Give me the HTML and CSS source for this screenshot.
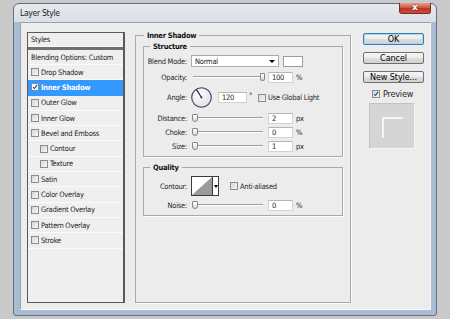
FILE: index.html
```html
<!DOCTYPE html>
<html lang="en">
<head>
  <meta charset="UTF-8">
  <title>Layer Style</title>
  <link rel="stylesheet" href="styles.css">
</head>
<body>
<div class="window">
  <div class="titlebar">
    <span class="title">Layer Style</span>
    <span class="close">x</span>
  </div>
  <div class="content">
    <!-- 左侧样式列表 -->
    <ul class="style-list">
      <li class="list-head">Styles</li>
      <li class="list-bar"></li>
      <li class="list-row blending">Blending Options: Custom</li>
      <li class="list-row"><span class="check"></span>Drop Shadow</li>
      <li class="list-row selected"><span class="check"><svg viewBox="0 0 8 8"><path d="M1.5 4 L3.3 6 L6.8 1.2"/></svg></span>Inner Shadow</li>
      <li class="list-row"><span class="check"></span>Outer Glow</li>
      <li class="list-row"><span class="check"></span>Inner Glow</li>
      <li class="list-row"><span class="check"></span>Bevel and Emboss</li>
      <li class="list-row sub"><span class="check"></span>Contour</li>
      <li class="list-row sub"><span class="check"></span>Texture</li>
      <li class="list-row"><span class="check"></span>Satin</li>
      <li class="list-row"><span class="check"></span>Color Overlay</li>
      <li class="list-row"><span class="check"></span>Gradient Overlay</li>
      <li class="list-row"><span class="check"></span>Pattern Overlay</li>
      <li class="list-row"><span class="check"></span>Stroke</li>
    </ul>

    <!-- 中间参数面板 -->
    <div class="group main-group">
      <div class="group-title">Inner Shadow</div>
      <div class="group sub-group structure">
        <div class="group-title">Structure</div>
        <div class="field blend-row">
          <span class="field-label">Blend Mode:</span>
          <div class="select"><span>Normal</span><span class="arrow"></span></div>
          <div class="swatch"></div>
        </div>
        <div class="field">
          <span class="field-label">Opacity:</span>
          <div class="slider"><span class="thumb" style="--v:100"></span></div>
          <div class="num">100</div>
          <span class="unit">%</span>
        </div>
        <div class="field angle-row">
          <span class="field-label">Angle:</span>
          <svg class="dial" viewBox="0 0 21 21">
            <defs>
              <radialGradient id="dialFill" cx="0.4" cy="0.35" r="0.7">
                <stop offset="0" stop-color="#ffffff"/>
                <stop offset="1" stop-color="#dedede"/>
              </radialGradient>
            </defs>
            <circle cx="10.5" cy="10.5" r="9.8" fill="url(#dialFill)" stroke="#33426b" stroke-width="1.1"/>
            <line x1="10.5" y1="10.5" x2="5.6" y2="2.6" stroke="#1c1c28" stroke-width="1.1"/>
            <circle cx="10.5" cy="10.5" r="0.9" fill="#1c1c28"/>
          </svg>
          <div class="num angle-num">120</div>
          <span class="degree">°</span>
          <span class="check global-check"></span>
          <span class="check-label">Use Global Light</span>
        </div>
        <div class="field">
          <span class="field-label">Distance:</span>
          <div class="slider"><span class="thumb" style="--v:0"></span></div>
          <div class="num">2</div>
          <span class="unit">px</span>
        </div>
        <div class="field">
          <span class="field-label">Choke:</span>
          <div class="slider"><span class="thumb" style="--v:0"></span></div>
          <div class="num">0</div>
          <span class="unit">%</span>
        </div>
        <div class="field">
          <span class="field-label">Size:</span>
          <div class="slider"><span class="thumb" style="--v:0"></span></div>
          <div class="num">1</div>
          <span class="unit">px</span>
        </div>
      </div>

      <div class="group sub-group quality">
        <div class="group-title">Quality</div>
        <div class="field contour-row">
          <span class="field-label">Contour:</span>
          <div class="contour">
            <svg class="contour-curve" viewBox="0 0 20 18" preserveAspectRatio="none">
              <polygon points="0,18 20,0 20,18" fill="#9a9a9a"/>
            </svg>
            <span class="contour-arrow"><span class="arrow"></span></span>
          </div>
          <span class="check aa-check"></span>
          <span class="check-label">Anti-aliased</span>
        </div>
        <div class="field">
          <span class="field-label">Noise:</span>
          <div class="slider"><span class="thumb" style="--v:0"></span></div>
          <div class="num">0</div>
          <span class="unit">%</span>
        </div>
      </div>
    </div>

    <!-- 右侧按钮 -->
    <div class="actions">
      <button class="btn default">OK</button>
      <button class="btn">Cancel</button>
      <button class="btn">New Style...</button>
      <div class="preview-toggle">
        <span class="check"><svg viewBox="0 0 8 8"><path d="M1.5 4 L3.3 6 L6.8 1.2"/></svg></span>
        <span>Preview</span>
      </div>
      <div class="preview-box"><div class="preview-shape"></div></div>
    </div>
  </div>
</div>
</body>
</html>
```

FILE: styles.css
```css
* {
  margin: 0;
  padding: 0;
  box-sizing: border-box;
}
body {
  background: #c9c9c9;
  font-family: "DejaVu Sans Condensed", "Liberation Sans", sans-serif;
  font-size: 7.5px;
  letter-spacing: -0.25px;
  color: #1e1e1e;
}
/* 窗口外框 */
.window {
  margin: 3px 0 0 13px;
  width: 424px;
  height: 313px;
  border: 1px solid #5f6f86;
  border-radius: 6px 6px 3px 3px;
  background: linear-gradient(#e6e9ec 0, #dbe0e6 18px, #aabcd2 18px);
  padding: 0 5px 5px 6px;
}
.titlebar {
  height: 18px;
  display: flex;
  justify-content: space-between;
  align-items: flex-start;
}
.title {
  font-size: 8.5px;
  letter-spacing: -0.3px;
  line-height: 18px;
  color: #1b1b1b;
}
.close {
  width: 32px;
  height: 11px;
  margin-top: -1px;
  border: 1px solid #7a2c22;
  border-top: none;
  border-radius: 0 0 3px 3px;
  background: linear-gradient(#e5a191 0, #d0594a 45%, #bb3526 55%, #c9503c 100%);
  color: #fff;
  font-family: "DejaVu Sans", sans-serif;
  font-weight: bold;
  font-size: 9px;
  letter-spacing: 0;
  line-height: 9px;
  text-align: center;
  text-shadow: 0 0 2px #5a1a12;
}
.content {
  height: 288px;
  border: 1px solid;
  border-color: #93a1b3 #f7f7f7 #f7f7f7 #93a1b3;
  background: #ececec;
  display: flex;
  align-items: flex-start;
  padding-left: 6px;
}
/* 样式列表 */
.style-list {
  list-style: none;
  margin-top: 9px;
  width: 98px;
  height: 271px;
  border: 1px solid #5a5a5a;
  border-right-width: 2px;
  background: #efefef;
}
.list-head {
  height: 14px;
  line-height: 14px;
  padding-left: 3px;
  border-bottom: 1px solid #fafafa;
}
.list-bar {
  height: 3px;
  background: #707070;
}
.list-row {
  display: flex;
  align-items: center;
  height: 15.3px;
  padding-left: 3px;
  border-bottom: 1px solid #fbfbfb;
  white-space: nowrap;
}
.list-row.blending {
  height: 15px;
}
.list-row.sub {
  padding-left: 12px;
}
.list-row.selected {
  background: #3399ff;
  color: #fff;
  font-weight: bold;
  border-bottom-color: #3399ff;
}
.check {
  flex: none;
  width: 8px;
  height: 8px;
  border: 1px solid #8c8c8c;
  background: linear-gradient(135deg, #d6d6d6, #f7f7f7);
  display: inline-flex;
}
.list-row .check {
  margin-right: 2px;
}
.check svg {
  width: 6px;
  height: 6px;
  fill: none;
  stroke: #1d3d8f;
  stroke-width: 1.4;
}
.selected .check {
  background: #f4f4f4;
}
/* 分组框 */
.group {
  border: 1px solid #a9a9a9;
  display: flex;
  flex-direction: column;
  box-shadow: 1px 1px 0 #fbfbfb;
}
.group-title {
  align-self: flex-start;
  margin: -5px 0 0 8px;
  padding: 0 3px;
  height: 9px;
  line-height: 9px;
  background: #ececec;
  font-weight: bold;
  color: #111;
}
.main-group {
  margin: 12px 0 0 10px;
  width: 216px;
  height: 268px;
}
.sub-group {
  margin: 6px 0 0 7px;
  width: 200px;
}
.sub-group .group-title {
  margin-left: 6px;
}
.structure {
  height: 111px;
}
.quality {
  margin-top: 10px;
  height: 49px;
}
.field {
  display: flex;
  align-items: center;
  height: 14px;
  white-space: nowrap;
}
.field-label {
  width: 43px;
  margin-right: 4px;
  text-align: right;
  color: #262626;
}
.blend-row {
  margin-top: 3px;
  margin-bottom: 2px;
}
.angle-row {
  height: 27px;
}
.contour-row {
  height: 22px;
  margin-top: 3px;
  margin-bottom: 1px;
}
.select {
  width: 88px;
  height: 12px;
  background: #fff;
  border: 1px solid #ababab;
  display: flex;
  align-items: center;
  justify-content: space-between;
  padding: 0 3px 0 3px;
}
.arrow {
  width: 0;
  height: 0;
  border-left: 3px solid transparent;
  border-right: 3px solid transparent;
  border-top: 3px solid #000;
}
.swatch {
  width: 20px;
  height: 11px;
  margin-left: 4px;
  background: #fff;
  border: 1px solid #9c9c9c;
}
.slider {
  width: 74px;
  height: 14px;
  display: flex;
  align-items: center;
  background:
    linear-gradient(#9d9d9d, #9d9d9d) 2px 6px / 70px 1px no-repeat,
    linear-gradient(#ffffff, #ffffff) 2px 7px / 70px 1px no-repeat;
}
.thumb {
  width: 6px;
  height: 8px;
  margin-left: calc(1px + var(--v) * 0.68px);
  border: 1px solid #858585;
  border-radius: 1px 1px 3px 3px;
  background: linear-gradient(#ffffff, #d9d9d9);
}
.num {
  width: 25px;
  height: 11px;
  margin-left: 3px;
  background: #fff;
  border: 1px solid #d2d2d2;
  border-top-color: #b5b5b5;
  padding-left: 3px;
  line-height: 9px;
}
.unit {
  margin-left: 3px;
}
.dial {
  width: 21px;
  height: 21px;
}
.angle-num {
  width: 29px;
  margin-left: 6px;
}
.degree {
  margin-left: 2px;
  align-self: flex-start;
  margin-top: 7px;
  width: 3px;
}
.global-check {
  margin-left: 6px;
}
.check-label {
  margin-left: 2px;
  color: #262626;
}
.contour {
  width: 28px;
  height: 20px;
  border: 1px solid #3c3c3c;
  background: #fff;
  display: flex;
}
.contour-curve {
  width: 20px;
  height: 18px;
}
.contour-arrow {
  width: 6px;
  border-left: 1px solid #3c3c3c;
  display: flex;
  align-items: center;
  justify-content: center;
}
.contour-arrow .arrow {
  border-left-width: 2px;
  border-right-width: 2px;
}
.aa-check {
  margin-left: 11px;
}
/* 右侧按钮 */
.actions {
  margin: 10px 0 0 12px;
  width: 61px;
  display: flex;
  flex-direction: column;
}
.btn {
  height: 12px;
  border: 1px solid #707070;
  border-radius: 2px;
  background: linear-gradient(#f5f5f5 0, #ececec 50%, #dedede 50%, #d0d0d0 100%);
  font: inherit;
  font-size: 9px;
  letter-spacing: -0.1px;
  line-height: 10px;
  color: #000;
}
.btn + .btn {
  margin-top: 7px;
}
.btn.default {
  border-color: #3a7db2;
  box-shadow: inset 0 0 0 1px #a6d8f4;
}
.preview-toggle {
  display: flex;
  align-items: center;
  height: 9px;
  margin: 6px 0 0 9px;
  font-size: 9px;
  letter-spacing: -0.2px;
}
.preview-toggle .check {
  margin-right: 3px;
}
.preview-box {
  width: 46px;
  height: 46px;
  margin: 5px 0 0 6px;
  background: #d5d5d5;
  border: 1px solid;
  border-color: #c2c2c2 #f6f6f6 #f6f6f6 #c2c2c2;
  padding: 13px 0 0 12px;
}
.preview-shape {
  width: 21px;
  height: 21px;
  border-top: 2px solid #f5f5f5;
  border-left: 2px solid #f5f5f5;
}
```
